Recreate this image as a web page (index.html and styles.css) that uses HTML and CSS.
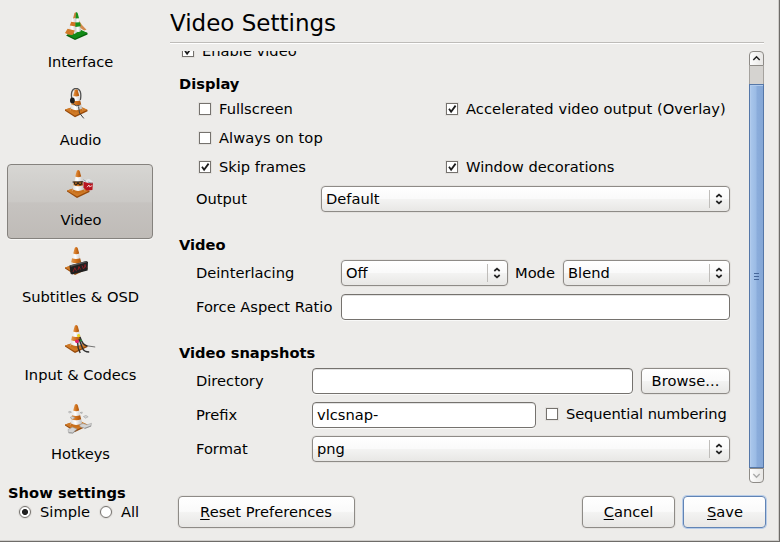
FILE: index.html
```html
<!DOCTYPE html>
<html lang="en">
<head>
<meta charset="utf-8">
<title>Video Settings</title>
<link rel="stylesheet" href="styles.css">
</head>
<body>
<svg class="defs" width="0" height="0">
  <defs>
    <linearGradient id="orange" x1="0" x2="1" y1="0" y2="0"><stop offset="0" stop-color="#e39a50"/><stop offset=".5" stop-color="#d0711c"/><stop offset="1" stop-color="#a8520c"/></linearGradient>
    <linearGradient id="white" x1="0" x2="1" y1="0" y2="0"><stop offset="0" stop-color="#d9d9d9"/><stop offset=".4" stop-color="#fff"/><stop offset="1" stop-color="#b9b9b9"/></linearGradient>
    <g id="cone">
      <path d="M1 22.6 11 29 23.5 23V21.8L14 18 1 21.4Z" fill="#96490a"/>
      <path d="M1 21.4 14 17 23.5 21.6 11 27.6Z" fill="#d07a26"/>
      <path d="M10.7 2Q12.2 .2 13.7 2L18.6 22Q12 26 6.4 22Z" fill="url(#white)"/>
      <path d="M10.7 2Q12.2 .2 13.7 2L15.2 7.6Q12 8.8 9.2 7.6Z" fill="url(#orange)"/>
      <path d="M8 12.2Q12 13.6 16.1 12.2L17.2 16.2Q12 18.2 7.2 16.2Z" fill="url(#orange)"/>
      <path d="M7 20.6Q12 23.4 17.9 20.6L18.6 22.6Q12 26.4 6.4 22.6Z" fill="#c8701c"/>
    </g>
    <symbol id="check" viewBox="0 0 12 12"><path d="M3 5.8 5.1 8.7 9.6 2.6" fill="none" stroke="#1c1c1c" stroke-width="1.8"/></symbol>
    <symbol id="spin" viewBox="0 0 8 12"><path d="M1.3 4 4 1.6 6.7 4M1.3 8 4 10.4 6.7 8" fill="none" stroke="#222" stroke-width="1.7"/></symbol>
  </defs>
</svg>
<div class="window">
  <div class="upper">
    <nav class="sidebar">
      <div class="item">
        <svg viewBox="0 0 32 32">
          <path d="M15 9.5 18 14 22.5 18.8 20 19.5 15 16Z" fill="#d28a4c"/>
          <path d="M2 24.6 11 29 23.5 23.4V22L14 18.5Z" fill="#08600a"/>
          <path d="M3 23.4 14 17.5 23.5 22 11 27.8Z" fill="#128a17"/>
          <path d="M10.5 2 12.5 1 13.5 21 10.5 23 4.5 18.5Z" fill="url(#white)"/>
          <path d="M10.5 2 12.5 1 12.6 6.5 9 7.5Z" fill="#c9803c"/>
          <path d="M7.2 10.8 12 11.6V15.4L5.8 14.4Z" fill="#d07426"/>
          <path d="M3.6 17.8 10.8 19.4 9 23.8Q5 24.4 1 22Z" fill="#d27a28"/>
          <path d="M12 1.2Q13.3 1 13.8 2.5L17 20Q15 21.5 11.8 20.5Z" fill="url(#white)"/>
          <path d="M12 1.2Q13.3 1 13.8 2.5L15 7.2 11.6 7.5ZM11.4 11.4 16 11.2 16.8 15.2 11.4 16Z" fill="#16911c"/>
        </svg>
        <span>Interface</span>
      </div>
      <div class="item">
        <svg viewBox="0 0 32 32"><use href="#cone" y=".2"/>
          <path d="M8 12C6.5 5 8 .4 12 .4S17.8 5 16.3 12" fill="none" stroke="#505050" stroke-width="1.3"/>
          <ellipse cx="8.4" cy="12.6" rx="2.4" ry="3" fill="#1d1d1d"/>
          <path d="M9 15.5Q12 19 15.5 17.5M14.6 18.5 15.5 25 19.8 30.4" fill="none" stroke="#444" stroke-width="1"/>
        </svg>
        <span>Audio</span>
      </div>
      <div class="item selected">
        <svg viewBox="0 0 32 32"><use href="#cone"/>
          <path d="M17.5 12.5 27 13.5 26.4 21 20.5 21.5 17.5 18.5Z" fill="#b8141f"/>
          <path d="M17 12.4 18.5 10 20 11 22.5 9.7 25 11 27.5 13.2 23 14.2Z" fill="#dfe3e7"/>
          <path d="M17.6 10.7 20 12.4M22 13 26.5 14.5" stroke="#77868f" stroke-width=".8"/>
          <path d="M21 18.2 23 16 23.5 17.8 26.2 16.6" fill="none" stroke="#f4dede" stroke-width=".9"/>
          <path d="M6.6 13 17.2 12.7M8.2 13.2Q8.4 16.5 10.6 15.8L12 13.6 13.3 15.6Q15.8 16.2 16 13" fill="#b0661e" stroke="#2a2018" stroke-width="1.1"/>
        </svg>
        <span>Video</span>
      </div>
      <div class="item">
        <svg viewBox="0 0 32 32"><use href="#cone"/>
          <path d="M5.5 19.5 22.5 15 24 16 23.6 24.5 8 28.5 6.5 27.5Z" fill="#202020"/>
          <path d="M5.5 19.5 22.5 15 23 16.2 7 20.8Z" fill="#555"/>
          <path d="M9 26 10.8 21.7 12.5 25.2M14 24 15 20.5 16.5 23.5M18 19.5 19.5 23M20.5 18.6 22 21.5M21.5 18.4 20 22.5" fill="none" stroke="#a51d25" stroke-width=".8"/>
        </svg>
        <span>Subtitles &amp; OSD</span>
      </div>
      <div class="item">
        <svg viewBox="0 0 32 32"><use href="#cone"/>
          <path d="M13.6 18Q13.4 24 16.2 29M15 15Q17 20 18.4 24T25.2 28M16 13Q18.4 21 23.4 22" fill="none" stroke="#303030" stroke-width="1.4"/>
          <path d="M23 21.8 31.2 23" fill="none" stroke="#666" stroke-width=".9"/>
          <circle cx="13" cy="17.3" r="1.9" fill="#e01e66"/><circle cx="14.6" cy="11.6" r="1.6" fill="#e9d51e"/><circle cx="17" cy="16.5" r="1" fill="#1f8a36"/>
        </svg>
        <span>Input &amp; Codecs</span>
      </div>
      <div class="item">
        <svg viewBox="0 0 32 32"><use href="#cone"/>
          <g fill="#d3d3d3" stroke="#969696" stroke-width=".5"><path d="M4 26.5 8.5 24.2 13 26 8.8 29.6 4.5 29.4ZM15.5 21.8 19 20.6 23 21.8 27.5 20.3 27 22.8 21 25.2 16.5 24ZM6 14.5 8.5 13.4 11 14.7 8.6 16.3ZM19.4 13.5 22 12.4 24.2 13.8 21.5 15.2ZM4.4 9 6 8.2 7.5 9.2 5.6 9.9ZM16 9.6 18.3 9 18 10.6Z"/></g>
          <path d="M4.6 29.8 8.8 30.2 13 26.6M20.5 25.6 27.2 23" fill="none" stroke="#7a7a7a" stroke-width=".7"/>
        </svg>
        <span>Hotkeys</span>
      </div>
    </nav>
    <main class="main">
      <h1>Video Settings</h1>
      <div class="scroller">
        <div class="content">
          <div class="row enable"><span class="box"><svg><use href="#check"/></svg></span><span>Enable video</span></div>
          <h2 class="display">Display</h2>
          <div class="row checks">
            <div class="opt"><span class="box"></span><span>Fullscreen</span></div>
            <div class="opt"><span class="box"><svg><use href="#check"/></svg></span><span class="wide">Accelerated video output (Overlay)</span></div>
          </div>
          <div class="row checks">
            <div class="opt"><span class="box"></span><span class="wide">Always on top</span></div>
          </div>
          <div class="row checks last">
            <div class="opt"><span class="box"><svg><use href="#check"/></svg></span><span>Skip frames</span></div>
            <div class="opt"><span class="box"><svg><use href="#check"/></svg></span><span>Window decorations</span></div>
          </div>
          <div class="field w-output"><label>Output</label><div class="combo"><span>Default</span><i><svg><use href="#spin"/></svg></i></div></div>
          <h2>Video</h2>
          <div class="field w-video"><label>Deinterlacing</label><div class="combo"><span>Off</span><i><svg><use href="#spin"/></svg></i></div><span class="mode">Mode</span><div class="combo"><span>Blend</span><i><svg><use href="#spin"/></svg></i></div></div>
          <div class="field w-video"><label>Force Aspect Ratio</label><div class="input"></div></div>
          <h2>Video snapshots</h2>
          <div class="field w-snap"><label>Directory</label><div class="input"></div><div class="button browse">Browse...</div></div>
          <div class="field w-snap"><label>Prefix</label><div class="input prefix">vlcsnap-</div><div class="opt seq"><span class="box"></span><span>Sequential numbering</span></div></div>
          <div class="field w-snap"><label>Format</label><div class="combo"><span>png</span><i><svg><use href="#spin"/></svg></i></div></div>
        </div>
        <div class="scrollbar">
          <div class="arrow up"><svg viewBox="0 0 13 13"><path d="M3.3 8 6.5 4.8 9.7 8" fill="none" stroke="#222" stroke-width="1.5"/></svg></div>
          <div class="trough"></div>
          <div class="thumb"><b></b><b></b><b></b></div>
          <div class="arrow down"><svg viewBox="0 0 13 13"><path d="M3.3 5 6.5 8.2 9.7 5" fill="none" stroke="#aaa" stroke-width="1.4"/></svg></div>
        </div>
      </div>
    </main>
  </div>
  <footer class="footer">
    <div class="show">
      <strong>Show settings</strong>
      <div class="radios"><span class="radio on"></span><span class="simple">Simple</span><span class="radio"></span><span>All</span></div>
    </div>
    <div class="button reset"><span><u>R</u>eset Preferences</span></div>
    <div class="button cancel"><span><u>C</u>ancel</span></div>
    <div class="button save"><span><u>S</u>ave</span></div>
  </footer>
</div>
</body>
</html>
```
FILE: styles.css
```css
* { box-sizing: border-box; }
body { margin: 0; background: #edecea; color: #000; font: 14.67px/22px "DejaVu Sans", sans-serif; white-space: nowrap; overflow: hidden; }
.defs { position: absolute; }
svg { display: block; }
.window { width: 780px; height: 542px; border-right: 1px solid #6e6c69; border-bottom: 1px solid #6e6c69; box-shadow: inset -1px -1px #cfcdca; }
.upper { display: flex; height: 484px; }

.sidebar { width: 170px; padding: 7px 17px 0 7px; display: flex; flex-direction: column; gap: 3px; }
.item { height: 75px; flex: none; padding-top: 4px; text-align: center; border-radius: 4px; }
.item:nth-child(2), .item:nth-child(5) { margin-bottom: 1px; }
.item:nth-child(2) { padding-top: 3px; }
.item:nth-child(2) span { margin-top: 9px; }
.item svg { width: 32px; height: 32px; margin-left: 57px; }
.item span { display: block; margin-top: 8px; padding-left: 1px; }
.item.selected { border: 1px solid #85827e; padding: 4px 0 0 1px; background: linear-gradient(#d7d6d3, #cbc9c6 50%, #c6c3c0 52%, #bfbbb7); box-shadow: 0 1px #f8f8f7; }

.main { width: 594px; }
h1 { margin: 0 0 8px; height: 43px; padding-top: 8px; font-size: 23px; line-height: 30px; font-weight: normal; border-bottom: 1px solid #bebcb9; box-shadow: 0 1px #fff; }
.scroller { display: flex; justify-content: space-between; height: 432px; overflow: hidden; }
.content { width: 560px; padding-left: 9px; margin-top: -11px; }
.row, .opt, .field { display: flex; align-items: center; }
.row { height: 22px; }
.box { width: 12px; height: 12px; flex: none; background: #fff; border: 1px solid #75726e; box-shadow: 0 0 0 1px #e3e1de; margin-right: 8px; }
.box svg { width: 12px; height: 12px; margin: -1px; }
.wide { letter-spacing: .06px; }
.enable { padding-left: 3px; }
h2 { margin: 22px 0 4px; font-size: 14.67px; line-height: 22px; }
h2.display { margin: 11px 0 3px; }
.checks { padding-left: 20px; margin-bottom: 7px; }
.checks .opt { width: 247px; }
.checks.last { margin-bottom: 8px; }
.field { height: 26px; padding-left: 17px; margin-bottom: 8px; }
.field label { flex: none; }
.w-output label { width: 125px; }
.w-video label { width: 145px; }
.w-snap label { width: 116px; }
.combo, .input, .button { border: 1px solid #8e8b87; border-radius: 4px; height: 26px; line-height: 24px; }
.combo, .input { flex: 1; }
.combo, .button { background: linear-gradient(#fff, #fafafa 48%, #f3f3f2 52%, #e8e7e5); box-shadow: 0 0 0 1px #e4e2df; }
.combo { display: flex; align-items: center; justify-content: space-between; padding-left: 4px; }
.combo i { width: 20px; height: 18px; border-left: 1px solid #bfbdba; display: flex; align-items: center; padding-left: 5px; }
.combo i svg { width: 8px; height: 12px; }
.mode { width: 55px; padding-left: 7px; }
.input { background: #fff; border-color: #75726e; box-shadow: inset 0 1px #e2e2e2, 0 1px #f9f9f8; padding-left: 4px; }
.input.prefix { flex: none; width: 224px; }
.seq { margin: -2px 0 0 10px; letter-spacing: -.1px; }
.button { text-align: center; }
.browse { width: 89px; margin-left: 8px; letter-spacing: .05px; }

.scrollbar { width: 15px; height: 432px; display: flex; flex-direction: column; }
.arrow { height: 15px; border: 1px solid #8e8b87; background: linear-gradient(90deg, #fdfdfd, #e8e7e5); }
.arrow svg { width: 13px; height: 13px; }
.up { border-radius: 4px 4px 0 0; }
.down { border-radius: 0 0 4px 4px; }
.trough { height: 18px; background: #d5d3d0; border: solid #a5a29e; border-width: 0 1px; }
.thumb { flex: 1; border: 1px solid #5577a8; background: linear-gradient(90deg, #abc8ec, #9bbbe5 45%, #8aacdb 55%, #85a7d6); box-shadow: inset 1px 1px #b1cbed; display: flex; flex-direction: column; justify-content: center; align-items: center; gap: 2px; }
.thumb b { width: 5px; height: 1px; background: #46679a; }

.footer { display: flex; height: 57px; padding: 0 13px 0 8px; }
.show { width: 170px; line-height: 19px; margin-top: -1px; }
.show strong { display: block; letter-spacing: .05px; }
.radios { display: flex; align-items: center; padding-left: 11px; }
.radio { width: 12px; height: 12px; border: 1px solid #75726e; border-radius: 50%; background: #fff; box-shadow: 0 0 0 1px #e0dedb; margin-right: 9px; }
.radio.on { background: radial-gradient(circle, #222 2.6px, #fff 3.5px); }
.simple { width: 60px; }
.footer .button { height: 32px; line-height: 30px; margin-top: 12px; }
.footer .reset { width: 177px; padding-right: 1px; }
.cancel { width: 93px; margin-left: auto; }
.save { width: 83px; margin-left: 8px; }
.footer .save { border-color: #6184b5; box-shadow: 0 0 0 1px #b7cce8; padding-left: 1px; }
u { text-underline-offset: 2px; text-decoration-thickness: 1px; }
```
